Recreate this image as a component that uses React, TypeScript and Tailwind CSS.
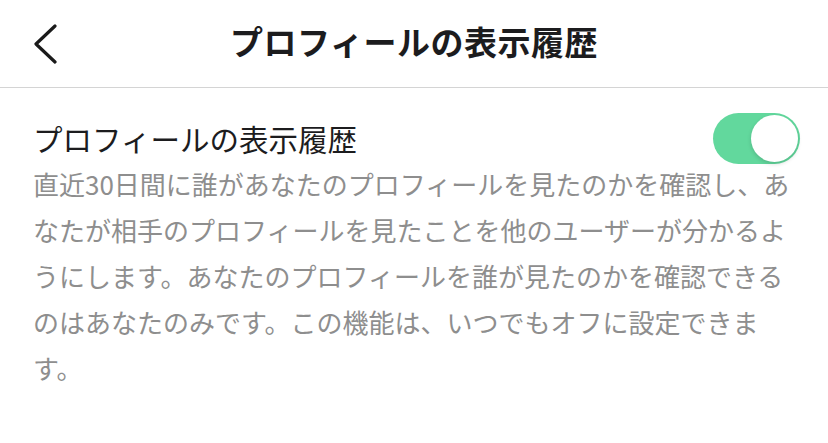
import { useState } from "react";

const Toggle = ({ on, onChange }: { on: boolean; onChange: () => void }) => (
  <button
    onClick={onChange}
    className={`-my-[6px] flex h-[51px] w-[87px] shrink-0 items-center rounded-full p-[2px] transition-colors ${
      on ? "bg-[#62d89d] justify-end" : "bg-[#e5e5ea] justify-start"
    }`}
  >
    <span className="h-[47px] w-[47px] rounded-full bg-white shadow-[0_2px_4px_rgba(0,0,0,0.15)]" />
  </button>
);

export default function App() {
  const [enabled, setEnabled] = useState(true);

  return (
    <div className="min-h-screen bg-white font-['Noto_Sans_CJK_JP',sans-serif]">
      <header className="grid h-[88px] grid-cols-[1fr_auto_1fr] items-center border-b border-[#d4d4d4]">
        <button className="ml-[32px] flex h-[40px] w-[30px] items-center">
          <svg width="26" height="40" viewBox="0 0 26 40" fill="none">
            <path
              d="M23 2 L4 20 L23 38"
              stroke="#1a1a1a"
              strokeWidth="3.2"
              strokeLinecap="round"
              strokeLinejoin="round"
            />
          </svg>
        </button>
        <h1 className="-mt-[4px] text-[33px] font-bold leading-none tracking-[0.5px] text-[#1c1c1e]">
          プロフィールの表示履歴
        </h1>
        <div />
      </header>

      <section className="pl-[33px] pr-[28px] pt-[30px]">
        <div className="flex items-center justify-between">
          <h2 className="text-[29.5px] leading-[40px] text-[#1c1c1e]">
            プロフィールの表示履歴
          </h2>
          <Toggle on={enabled} onChange={() => setEnabled(!enabled)} />
        </div>
        <p className="mt-[3px] text-[26px] leading-[46px] text-[#8e8e8e]">
          直近30日間に誰があなたのプロフィールを見たのかを確認し、あなたが相手のプロフィールを見たことを他のユーザーが分かるようにします。あなたのプロフィールを誰が見たのかを確認できるのはあなたのみです。この機能は、いつでもオフに設定できます。
        </p>
      </section>
    </div>
  );
}
